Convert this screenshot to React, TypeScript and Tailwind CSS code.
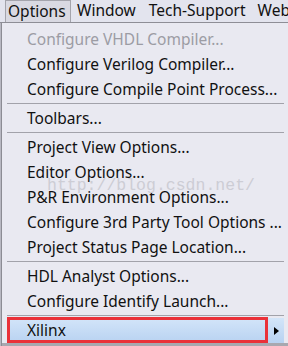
import React from "react";

type Item = { t: string; disabled?: boolean } | "sep";

const items: Item[] = [
  { t: "Configure VHDL Compiler...", disabled: true },
  { t: "Configure Verilog Compiler..." },
  { t: "Configure Compile Point Process..." },
  "sep",
  { t: "Toolbars..." },
  "sep",
  { t: "Project View Options..." },
  { t: "Editor Options..." },
  { t: "P&R Environment Options..." },
  { t: "Configure 3rd Party Tool Options ..." },
  { t: "Project Status Page Location..." },
  "sep",
  { t: "HDL Analyst Options..." },
  { t: "Configure Identify Launch..." },
  "sep",
];

export default function App() {
  return (
    <div
      className="relative w-[288px] h-[346px] overflow-hidden bg-[#e9e9f1] text-[15.5px] text-[#111]"
      style={{ fontFamily: '"Noto Sans", "Open Sans", sans-serif' }}
    >
      {/* menu bar */}
      <div className="flex h-[23px] items-stretch overflow-hidden whitespace-nowrap bg-[#e3e4ee] border-b border-[#8e8e96]">
        <div className="shrink-0 ml-[5px] w-[66px] flex items-center pl-[2px] bg-[#d9d9e2] border border-[#a4a4ac] border-b-0 leading-none">
          Options
        </div>
        <div className="shrink-0 ml-[6px] flex items-center leading-none">Window</div>
        <div className="shrink-0 ml-[13px] flex items-center leading-none">Tech-Support</div>
        <div className="shrink-0 ml-[12px] flex items-center leading-none">Web</div>
      </div>

      <div className="flex">
        <div className="w-[1px] bg-[#b8b8c2]" />
        <div className="w-[1px] bg-[#8c8c94]" />
        <div className="flex-1 flex flex-col pt-[4px]">
          {items.map((it, i) =>
            it === "sep" ? (
              <div key={i} className="h-[4px] pt-[1px] pl-[5px] pr-[4px]">
                <div className="h-px bg-[#a2a2aa]" />
              </div>
            ) : (
              <div
                key={i}
                className={`h-[25px] flex items-center pl-[25px] leading-none whitespace-nowrap ${
                  it.disabled ? "text-[#9c9ca4]" : ""
                }`}
              >
                {it.t}
              </div>
            )
          )}
          <div className="relative h-[25px] ml-[5px] mr-[4px] flex items-center pl-[20px] leading-none bg-gradient-to-b from-[#d3e5f9] to-[#b8d2f1]">
            Xilinx
            <div className="absolute left-0 top-[-1px] w-[261px] h-[26px] border-[3px] border-[#ea3139]" />
            <svg
              className="absolute right-[5px] top-[9px]"
              width="5"
              height="8"
              viewBox="0 0 5 8"
            >
              <path d="M0 0 L5 4 L0 8 Z" fill="#000" />
            </svg>
          </div>
          <div className="h-[3px] bg-[#a8a8b0]" />
        </div>
      </div>

      {/* watermark */}
      <div
        className="absolute left-[47px] top-[178px] whitespace-nowrap text-[16.5px] leading-none text-[#cdcdd5] pointer-events-none"
        style={{ fontFamily: '"Liberation Mono", monospace' }}
      >
        http://blog.csdn.net/
      </div>
    </div>
  );
}
